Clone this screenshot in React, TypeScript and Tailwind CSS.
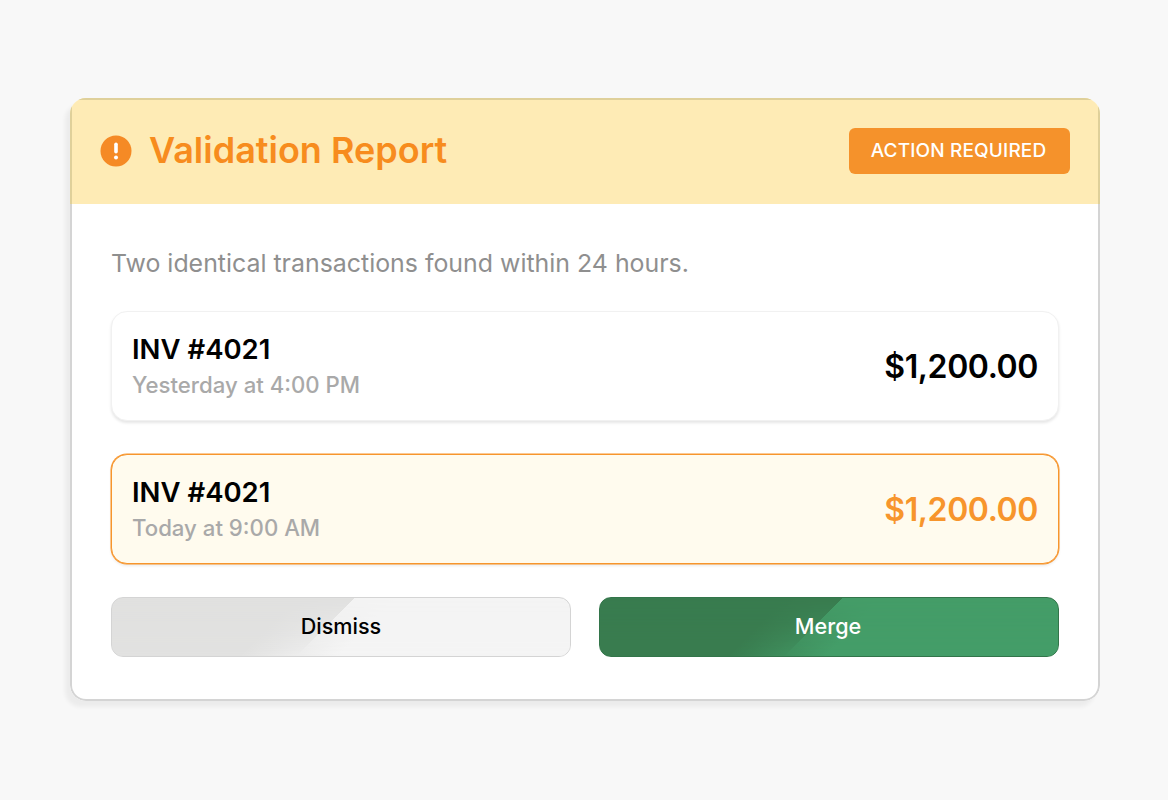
const font = { fontFamily: 'Inter, sans-serif' };

function InvoiceRow({ title, date, amount, flagged }: { title: string; date: string; amount: string; flagged?: boolean }) {
  return (
    <div
      className={`flex h-[110px] items-center justify-between rounded-2xl border px-5 ${
        flagged
          ? 'border-[#f7952c] bg-[#fffbee] shadow-[0_0_0_0.5px_#f7952c,0_2px_3px_rgba(0,0,0,0.08)]'
          : 'border-[#f1f1f1] bg-white shadow-[0_2px_3px_rgba(0,0,0,0.1)]'
      }`}
    >
      <div className="-mt-[2px]">
        <div className="text-[27.5px] leading-[34px] font-semibold text-black">{title}</div>
        <div className="mt-[6px] text-[22.2px] leading-[26px] font-medium text-[#a9a9a9]">{date}</div>
      </div>
      <div className={`pt-[2px] text-[32px] font-semibold tracking-[-0.4px] ${flagged ? 'text-[#f7952c]' : 'text-black'}`}>{amount}</div>
    </div>
  );
}

export default function App() {
  return (
    <div className="h-[800px] w-[1168px] bg-[#f8f8f8] pt-[98px] pl-[70px]" style={font}>
      <div className="w-[1030px] overflow-hidden rounded-2xl bg-white shadow-[-5px_6px_4px_rgba(0,0,0,0.05)]">
        <div className="flex h-[106px] items-center justify-between border-x-2 border-t-2 border-[#dfd09a] bg-[#feebb5] px-7 pb-[2px]">
          <div className="flex items-center gap-[17px]">
            <svg width="32" height="32" viewBox="0 0 32 32">
              <circle cx="16" cy="16" r="15.5" fill="#f58a25" />
              <rect x="14.2" y="7.5" width="3.6" height="11" rx="1.8" fill="#fff" />
              <circle cx="16" cy="22.5" r="2" fill="#fff" />
            </svg>
            <h1 className="-mt-[2px] text-[36px] font-semibold text-[#f78c1e]">Validation Report</h1>
          </div>
          <div className="flex h-[46px] w-[221px] items-center justify-center rounded-md bg-[#f5922b] pr-[2px] text-[19px] font-medium tracking-[0.15px] text-white">
            ACTION REQUIRED
          </div>
        </div>

        <div className="rounded-b-2xl border-x-2 border-b-2 border-[#d4d4d4] px-[39px] pt-[42px] pb-[42px]">
          <p className="mb-[31px] text-[24.9px] leading-[34px] text-[#8f8f8f]">
            Two identical transactions found within 24 hours.
          </p>
          <div className="flex flex-col gap-[33px]">
            <InvoiceRow title="INV #4021" date="Yesterday at 4:00 PM" amount="$1,200.00" />
            <InvoiceRow title="INV #4021" date="Today at 9:00 AM" amount="$1,200.00" flagged />
          </div>
          <div className="mt-[33px] grid grid-cols-2 gap-7">
            <button className="relative flex h-[60px] items-center justify-center overflow-hidden rounded-xl border border-[#d4d4d4] bg-[linear-gradient(135deg,#e1e1e0_47%,#f4f4f4_47%)] pb-[2px] text-[21.6px] font-medium text-black">
              <span className="absolute inset-0 bg-[linear-gradient(135deg,#e1e1e0_36%,#f4f4f4_55%)] [mask-image:linear-gradient(to_bottom,transparent,black)]" />
              <span className="relative">Dismiss</span>
            </button>
            <button className="relative flex h-[60px] items-center justify-center overflow-hidden rounded-xl border border-[#33754a] bg-[linear-gradient(135deg,#397c4f_47%,#449d68_47%)] pr-[2px] pb-[2px] text-[21.6px] font-medium text-white">
              <span className="absolute inset-0 bg-[linear-gradient(135deg,#397c4f_36%,#449d68_55%)] [mask-image:linear-gradient(to_bottom,transparent,black)]" />
              <span className="relative">Merge</span>
            </button>
          </div>
        </div>
      </div>
    </div>
  );
}
